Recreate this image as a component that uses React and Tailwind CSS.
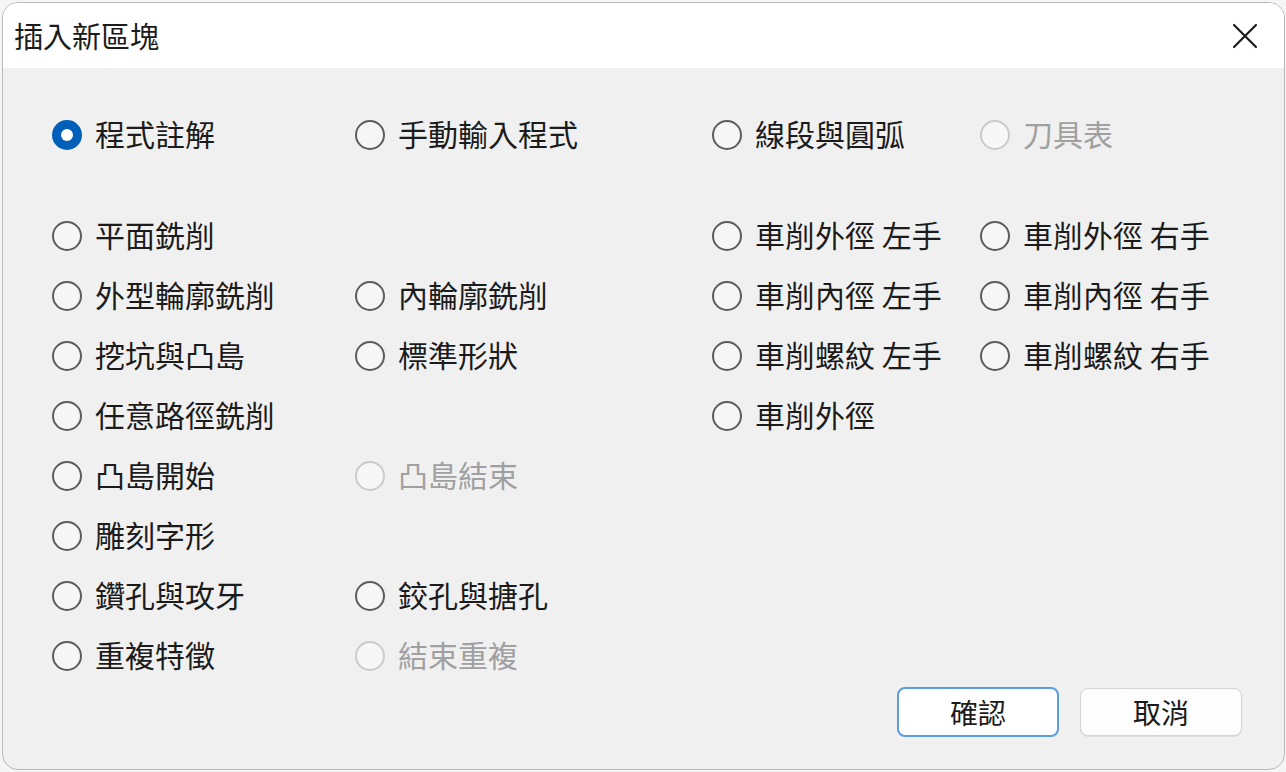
import { useState } from 'react'

const rows = [
  [{ label: '程式註解', id: 'comment' }, { label: '手動輸入程式', id: 'manual' }, { label: '線段與圓弧', id: 'arc' }, { label: '刀具表', id: 'tools', disabled: true }],
  [{ label: '平面銑削', id: 'face' }, null, { label: '車削外徑 左手', id: 'odl' }, { label: '車削外徑 右手', id: 'odr' }],
  [{ label: '外型輪廓銑削', id: 'contour' }, { label: '內輪廓銑削', id: 'inner' }, { label: '車削內徑 左手', id: 'idl' }, { label: '車削內徑 右手', id: 'idr' }],
  [{ label: '挖坑與凸島', id: 'pocket' }, { label: '標準形狀', id: 'shape' }, { label: '車削螺紋 左手', id: 'thl' }, { label: '車削螺紋 右手', id: 'thr' }],
  [{ label: '任意路徑銑削', id: 'path' }, null, { label: '車削外徑', id: 'od' }, null],
  [{ label: '凸島開始', id: 'islandStart' }, { label: '凸島結束', id: 'islandEnd', disabled: true }, null, null],
  [{ label: '雕刻字形', id: 'engrave' }, null, null, null],
  [{ label: '鑽孔與攻牙', id: 'drill' }, { label: '鉸孔與搪孔', id: 'ream' }, null, null],
  [{ label: '重複特徵', id: 'repeat' }, { label: '結束重複', id: 'repeatEnd', disabled: true }, null, null],
]

function Radio({ item, checked, onPick }) {
  const dis = item.disabled
  return (
    <label className={'flex items-center gap-[13px] h-[60px] ' + (dis ? 'text-[#a0a0a0]' : 'text-[#1b1b1b] cursor-pointer')}>
      <span
        onClick={() => !dis && onPick(item.id)}
        className={
          'w-[30px] h-[30px] rounded-full flex items-center justify-center shrink-0 ' +
          (checked
            ? 'bg-[#005fb8]'
            : dis
            ? 'border-2 border-[#cbcbcb] bg-[#f7f7f7]'
            : 'border-2 border-[#5c5c5c] bg-[#f6f6f6]')
        }
      >
        {checked && <span className="w-[12px] h-[12px] rounded-full bg-white" />}
      </span>
      <span className="whitespace-pre -translate-y-[2px]">{item.label}</span>
    </label>
  )
}

export default function App() {
  const [picked, setPicked] = useState('comment')

  return (
    <div className="h-[772px] w-[1286px] bg-[#f5f5f5] p-[2px] pr-[1px]" style={{ fontFamily: '"Noto Sans CJK TC", "Noto Sans", sans-serif' }}>
      <div className="h-[768px] rounded-[16px] border border-[#b9b9b9] overflow-hidden bg-[#f0f0f0] flex flex-col">
        <div className="h-[65px] bg-white flex items-center justify-between pl-[11px] pr-[26px] shrink-0">
          <span className="text-[29px] text-[#1b1b1b]">插入新區塊</span>
          <svg width="26" height="26" viewBox="0 0 26 26" className="text-[#1b1b1b]">
            <path d="M2 2L24 24M24 2L2 24" stroke="currentColor" strokeWidth="2.2" strokeLinecap="round" />
          </svg>
        </div>

        <div className="flex-1 pt-[37px] pl-[49px] text-[30px] leading-none">
          <div className="grid grid-cols-[303px_357px_268px_260px]">
            {rows.map((row, r) =>
              row.map((item, c) => (
                <div key={r + '-' + c} className={r === 0 ? 'mb-[41px]' : ''}>
                  {item ? <Radio item={item} checked={picked === item.id} onPick={setPicked} /> : <div className="h-[60px]" />}
                </div>
              ))
            )}
          </div>

          <div className="flex justify-end gap-[21px] pr-[42px] mt-[1px]">
            <button className="w-[162px] h-[50px] rounded-[8px] border-2 border-[#5a9ee0] bg-white text-[28px] text-[#1b1b1b]">確認</button>
            <button className="w-[162px] h-[48px] mt-[1px] rounded-[8px] border border-[#d4d4d4] bg-[#fdfdfd] text-[28px] text-[#1b1b1b] shadow-[0_1px_1px_rgba(0,0,0,0.08)]">取消</button>
          </div>
        </div>
      </div>
    </div>
  )
}
